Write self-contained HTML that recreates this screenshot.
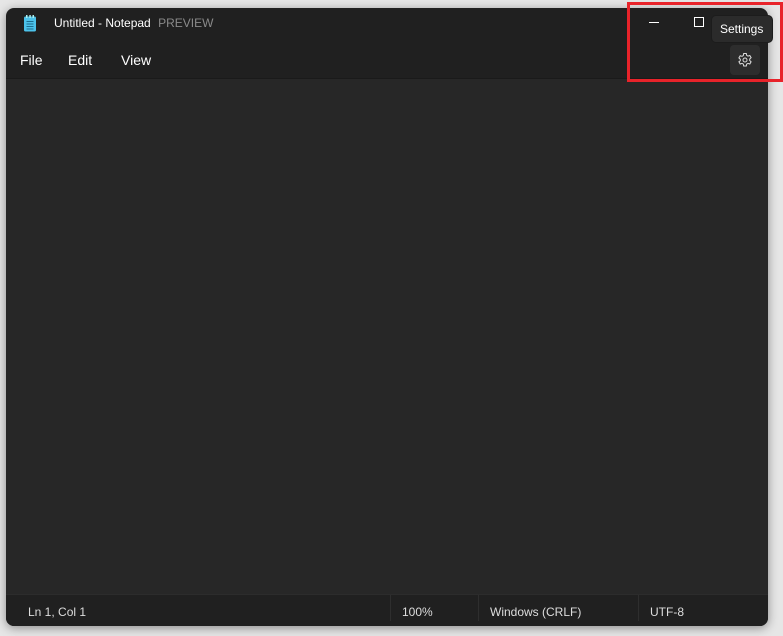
<!DOCTYPE html>
<html><head><style>
body{margin:0;width:783px;height:636px;background:#e6e6e6;position:relative;overflow:hidden;font-family:"Liberation Sans",sans-serif;}
.win{position:absolute;left:6px;top:8px;width:762px;height:618px;background:#202020;border-radius:8px;overflow:hidden;box-shadow:0 2px 10px rgba(0,0,0,.4);}
.t{position:absolute;color:#fff;white-space:nowrap}
.ed{position:absolute;left:0;top:70px;width:762px;height:516px;background:#272727;border-top:1px solid #1a1a1a;}
.sb{position:absolute;top:586px;left:0;width:762px;height:32px;background:#202020;border-top:1px solid #2c2c2c}
.sep{position:absolute;top:593px;width:1px;height:26px;background:#2e2e2e}
</style></head><body>
<div class="win">
  <svg style="position:absolute;left:17px;top:7px" width="14" height="17" viewBox="0 0 14 17"><rect x="1" y="1.5" width="12" height="15" rx="1.5" fill="#4cc2ea"/><rect x="3" y="0" width="1.5" height="3" fill="#aee"/><rect x="6.3" y="0" width="1.5" height="3" fill="#aee"/><rect x="9.5" y="0" width="1.5" height="3" fill="#aee"/><g stroke="#1b6e90" stroke-width="1"><line x1="3.5" y1="6.5" x2="10.5" y2="6.5"/><line x1="3.5" y1="9" x2="10.5" y2="9"/><line x1="3.5" y1="11.5" x2="10.5" y2="11.5"/><line x1="3.5" y1="14" x2="10.5" y2="14"/></g></svg>
  <div class="t" style="left:48px;top:8px;font-size:12px">Untitled - Notepad <span style="color:#8a8a8a;margin-left:4px">PREVIEW</span></div>
  <div class="t" style="left:14px;top:44px;font-size:14px">File</div>
  <div class="t" style="left:62px;top:44px;font-size:14px">Edit</div>
  <div class="t" style="left:115px;top:44px;font-size:14px">View</div>
  <div style="position:absolute;left:643px;top:14px;width:10px;height:1px;background:#fff"></div>
  <div style="position:absolute;left:688px;top:9px;width:8px;height:8px;border:1px solid #fff"></div>
  <div style="position:absolute;left:724px;top:37px;width:30px;height:30px;background:#2d2d2d;border-radius:4px"></div>
  <svg style="position:absolute;left:731px;top:44px" width="16" height="16" viewBox="0 0 16 16" fill="none" stroke="#ddd" stroke-width="1"><path d="M6.7 1.5h2.6l.4 1.9 1.3.7 1.8-.6 1.3 2.2-1.4 1.3v1.5l1.4 1.3-1.3 2.2-1.8-.6-1.3.7-.4 1.9H6.7l-.4-1.9-1.3-.7-1.8.6-1.3-2.2L3.3 8.8V7.2L1.9 5.9l1.3-2.2 1.8.6 1.3-.7z"/><circle cx="8" cy="8" r="2"/></svg>
  <div class="ed"></div>
  <div class="sb"></div>
  <div class="sep" style="left:384px;top:587px"></div>
  <div class="sep" style="left:472px;top:587px"></div>
  <div class="sep" style="left:632px;top:587px"></div>
  <div class="t" style="left:22px;top:597px;font-size:12px;color:#ddd">Ln 1, Col 1</div>
  <div class="t" style="left:396px;top:597px;font-size:12px;color:#ddd">100%</div>
  <div class="t" style="left:484px;top:597px;font-size:12px;color:#ddd">Windows (CRLF)</div>
  <div class="t" style="left:644px;top:597px;font-size:12px;color:#ddd">UTF-8</div>
</div>
<div style="position:absolute;left:711px;top:15px;width:62px;height:28px;background:#2b2b2b;border:1px solid #1c1c1c;border-radius:5px;box-sizing:border-box"></div>
<div class="t" style="left:720px;top:22px;font-size:12px">Settings</div>
<div style="position:absolute;left:627px;top:2px;width:156px;height:80px;border:3px solid #e8232a;box-sizing:border-box"></div>
</body></html>
